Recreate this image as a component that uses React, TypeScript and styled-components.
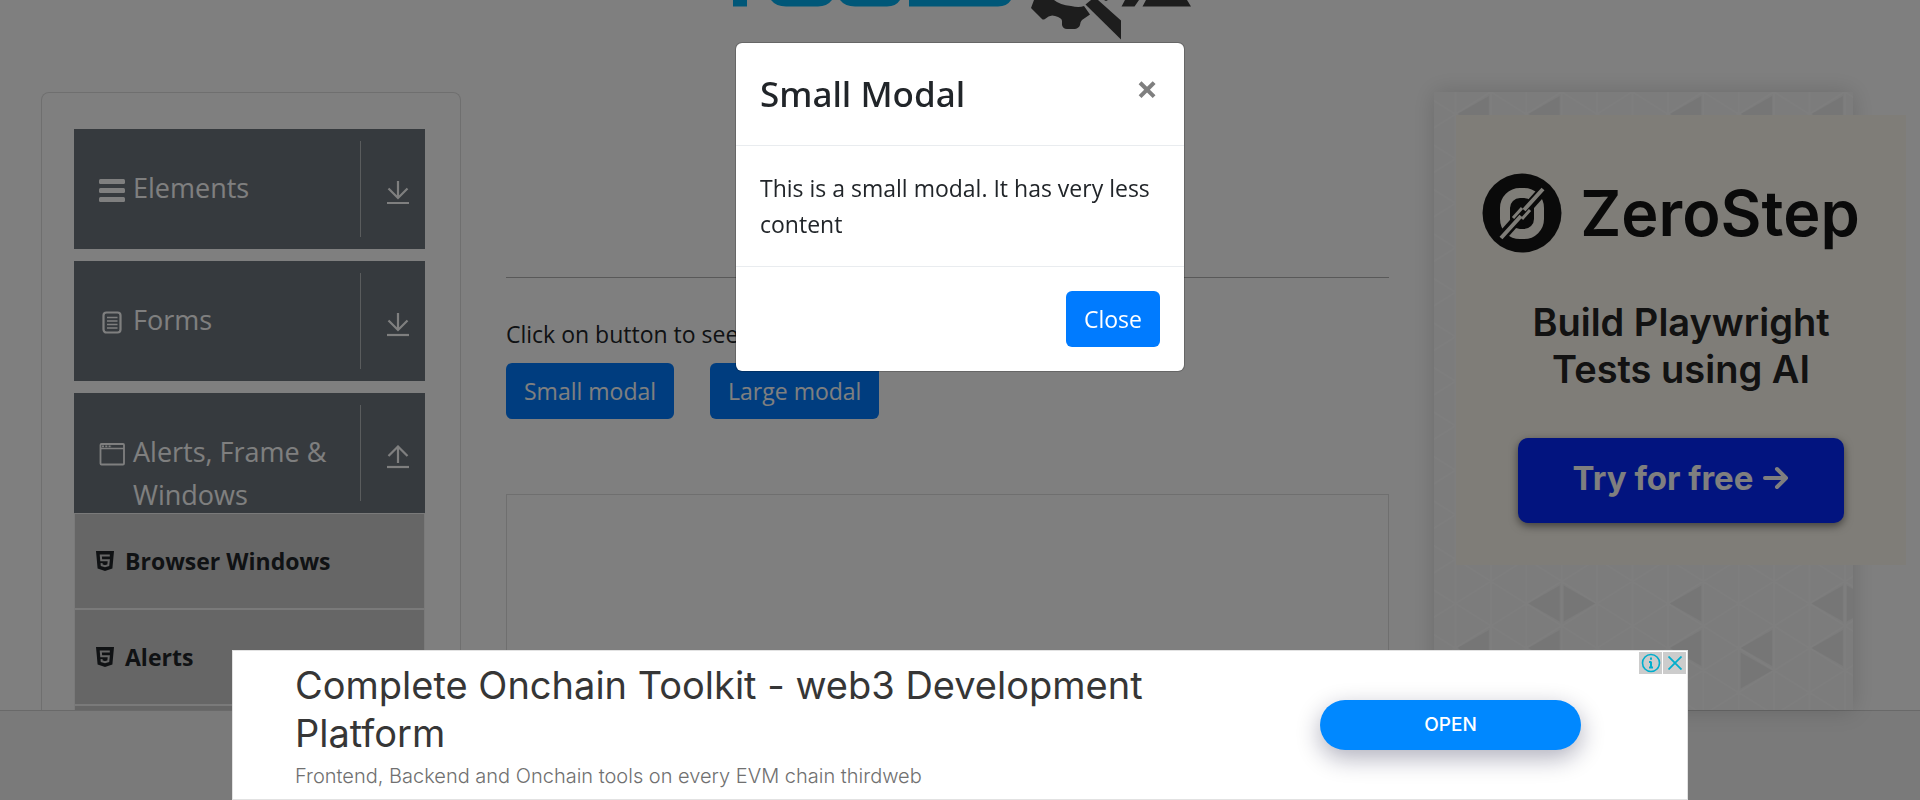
import React from 'react';
import styled, { createGlobalStyle } from 'styled-components';

const ui = '"Segoe UI", "Open Sans", "Noto Sans", sans-serif';
const adFont = 'Inter, Roboto, sans-serif';

const GlobalStyle = createGlobalStyle`
  *, *::before, *::after { box-sizing: border-box; }
  body { margin: 0; background: #fff; color: #212529; font: 400 23px/36px ${ui}; overflow: hidden; }
  h1, h2, p, ul { margin: 0; padding: 0; }
  button { font: inherit; border: 0; cursor: pointer; }
`;

const Page = styled.div`
  display: grid;
  grid-template-columns: minmax(0, 1fr);
  grid-template-rows: 92px minmax(0, 1fr) 90px;
  height: 100vh;
  overflow: hidden;
`;

const Header = styled.header`
  display: flex;
  justify-content: center;
  padding-left: 4px;
`;

const Logo = styled.svg`
  width: 460px;
  height: 40px;
`;

const Columns = styled.div`
  display: grid;
  grid-template-columns: minmax(0, 420fr) minmax(0, 883fr) minmax(0, 419fr);
  gap: 45px;
  padding: 0 67px 0 41px;
  min-height: 0;
`;

const Sidebar = styled.nav`
  display: flex;
  flex-direction: column;
  gap: 12px;
  padding: 36px 35px 0 32px;
  border: 1px solid #dfdfdf;
  border-bottom: 0;
  border-radius: 8px 8px 0 0;
  overflow: hidden;
`;

const MenuButton = styled.button`
  display: flex;
  flex: none;
  align-items: flex-start;
  width: 100%;
  height: 120px;
  padding: 0 16px 0 25px;
  background: #6c757d;
  color: #fff;
  text-align: left;
  font-size: 27px;
  line-height: 43px;
`;

const MenuIcon = styled.svg`
  flex: none;
  width: 26px;
  height: 26px;
  margin: 49px 8px 0 0;
`;

const MenuLabel = styled.span`
  flex: 1;
  padding-top: 37px;
`;

const Toggle = styled.span`
  flex: none;
  display: flex;
  align-items: center;
  align-self: center;
  height: 96px;
  padding: 8px 0 0 26px;
  border-left: 1px solid #b4b8bb;
`;

const SubMenuGroup = styled.div`
  flex: none;
`;

const SubMenu = styled.ul`
  list-style: none;
`;

const SubLink = styled.a`
  display: flex;
  align-items: center;
  gap: 11px;
  height: 96px;
  padding-left: 21px;
  border: 1px solid #f4f4f4;
  background: #ccc;
  color: #212529;
  font-weight: 700;
  text-decoration: none;
`;

const Main = styled.main`
  display: flex;
  flex-direction: column;
  padding-top: 185px;
  min-width: 0;
`;

const Rule = styled.hr`
  width: 100%;
  margin: 0 0 38px;
  border: 0;
  border-top: 1px solid #b2b2b2;
`;

const ButtonRow = styled.div`
  display: flex;
  gap: 36px;
  margin: 11px 0 75px;
`;

const PrimaryButton = styled.button`
  height: 56px;
  padding: 0 18px;
  border-radius: 6px;
  background: #007bff;
  color: #fff;
`;

const AdFrame = styled.div`
  flex: 1;
  border: 1px solid #dfdfdf;
  border-bottom: 0;
`;

const PromoPanel = styled.aside`
  position: relative;
  padding: 23px 22px 0;
  background: #f8f8f8;
  box-shadow: 0 0 22px rgba(0, 0, 0, 0.16);
`;

const Pattern = styled.svg`
  position: absolute;
  inset: 0;
  width: 100%;
  height: 100%;
`;

const Promo = styled.section`
  position: relative;
  display: flex;
  flex-direction: column;
  align-items: center;
  width: 450px;
  height: 450px;
  padding-top: 57px;
  background: #fefaf0;
  color: #151515;
  font-family: ${adFont};
`;

const Brand = styled.div`
  display: flex;
  align-items: center;
  gap: 18px;
  height: 81px;
  padding-right: 20px;
  font-size: 63px;
  font-weight: 600;
`;

const PromoText = styled.p`
  width: 340px;
  margin: 46px 0 45px;
  text-align: center;
  color: #242424;
  font-size: 38px;
  font-weight: 600;
  line-height: 47px;
`;

const PromoButton = styled.button`
  display: flex;
  align-items: center;
  justify-content: center;
  gap: 10px;
  width: 326px;
  height: 85px;
  padding-bottom: 6px;
  border-radius: 10px;
  background: #0428ff;
  box-shadow: 0 3px 8px rgba(0, 0, 0, 0.5);
  color: #fff;
  font-size: 33px;
  font-weight: 700;
`;

const Footer = styled.footer`
  border-top: 1px solid #d2d2d2;
  background: #f4f4f4;
`;

const Backdrop = styled.div`
  position: fixed;
  inset: 0;
  display: flex;
  align-items: flex-start;
  justify-content: center;
  padding-top: 42px;
  background: rgba(0, 0, 0, 0.5);
`;

const Dialog = styled.div`
  width: 450px;
  border: 1px solid rgba(0, 0, 0, 0.2);
  border-radius: 7px;
  background: #fff;
  background-clip: padding-box;
`;

const DialogHeader = styled.div`
  display: flex;
  justify-content: space-between;
  align-items: flex-start;
  padding-left: 24px;
  border-bottom: 1px solid #e9ecef;
`;

const DialogTitle = styled.h1`
  padding: 24px 0;
  font-family: "Noto Sans", sans-serif;
  font-size: 35px;
  font-weight: 500;
  line-height: 54px;
`;

const DismissButton = styled.button`
  width: 74px;
  height: 90px;
  padding: 0;
  background: none;
  color: #7f7f7f;
  font-size: 38px;
  font-weight: 700;
`;

const DialogBody = styled.p`
  padding: 24px;
`;

const DialogFooter = styled.div`
  display: flex;
  justify-content: flex-end;
  padding: 24px;
  border-top: 1px solid #e9ecef;
`;

const BannerDock = styled.div`
  position: fixed;
  left: 0;
  right: 0;
  bottom: 0;
  display: flex;
  justify-content: center;
`;

const Banner = styled.section`
  position: relative;
  display: flex;
  align-items: center;
  justify-content: space-between;
  width: 1456px;
  height: 150px;
  padding: 0 106px 0 62px;
  border: 1px solid #e2e2e2;
  background: #fff;
  font-family: ${adFont};
`;

const BannerCopy = styled.div`
  width: 920px;
`;

const BannerTitle = styled.h2`
  color: #363636;
  font-size: 38px;
  font-weight: 400;
  line-height: 48px;
`;

const BannerText = styled.p`
  margin-top: 5px;
  color: #707070;
  font-size: 20px;
  font-weight: 300;
  line-height: 28px;
`;

const OpenButton = styled.button`
  width: 261px;
  height: 50px;
  border-radius: 25px;
  background: #0088ff;
  box-shadow: 0 8px 24px rgba(10, 10, 50, 0.32);
  color: #fff;
  font-size: 19px;
  font-weight: 500;
`;

const Badges = styled.div`
  position: absolute;
  top: 1px;
  right: 1px;
  display: flex;
  gap: 1px;
`;

const Badge = styled.button`
  display: flex;
  align-items: center;
  justify-content: center;
  width: 23px;
  height: 22px;
  padding: 0;
  background: #ccc;
`;

function ToolsLogo() {
  return (
    <Logo viewBox="0 0 460 40" role="img" aria-label="Tools QA">
      <g fill="#00aef0">
        <path d="M1 0H15V6.500H1Z" />
        <path d="M39 0H100Q95 6.500 86 6.500H54Q44 6.500 39 0Z" />
        <path d="M108 0H168Q164 6.500 155 6.500H123Q113 6.500 108 0Z" />
        <path d="M177 0H279Q275 6.500 266 6.500H177Z" />
      </g>
      <g fill="#3a3a3a">
        <path d="M302 0L299 8L310 19Q311 20 313 19Q318 14 323 16Q330 18 330 21V25Q331 29 335 29H343Q347 28 348 25Q348 22 350 20L358 14.500L352 6Q347 8 339 6Q328 5 322 0Z" />
        <path d="M353.500 4.500L359 0H366L389 20.500V39.500Z" />
        <path d="M389.500 6.500L393 0H407L402.500 6.500Z" />
        <path d="M410.500 6.500L414 0H455L459 6.500Z" />
        <path d="M372 0H376L374 1Z" />
      </g>
    </Logo>
  );
}

function ElementsIcon() {
  return (
    <MenuIcon viewBox="0 0 26 26" fill="currentColor" aria-hidden="true">
      <rect x="0" y="1" width="26" height="5" rx="1.500" />
      <rect x="0" y="10" width="26" height="5" rx="1.500" />
      <rect x="0" y="19" width="26" height="5" rx="1.500" />
    </MenuIcon>
  );
}

function FormsIcon() {
  return (
    <MenuIcon viewBox="0 0 26 26" fill="none" stroke="currentColor" aria-hidden="true">
      <rect x="4.500" y="2.500" width="17" height="20" rx="3" strokeWidth="2.200" />
      <path d="M8 7.500H18.500M8 11H18.500M8 14.500H18.500M8 18H18.500" strokeWidth="1.400" />
    </MenuIcon>
  );
}

function WindowIcon() {
  return (
    <MenuIcon viewBox="0 0 26 26" fill="none" stroke="currentColor" aria-hidden="true">
      <rect x="1.500" y="2" width="23.500" height="20.500" rx="1" strokeWidth="1.800" />
      <path d="M1.500 6.500H25" strokeWidth="1.500" />
      <path d="M3 4.300H13" strokeWidth="1.800" strokeDasharray="2 1.300" />
    </MenuIcon>
  );
}

function ToggleIcon({ open }: { open?: boolean }) {
  return (
    <svg width="22" height="24" viewBox="0 0 22 24" fill="none" stroke="currentColor" strokeWidth="2.200" aria-hidden="true">
      <path d={open ? 'M11 18V1.500M1.500 11L11 1.500L20.500 11' : 'M11 0V17M1.500 7.500L11 17L20.500 7.500'} />
      <path d="M0 22H22" />
    </svg>
  );
}

function HtmlIcon() {
  return (
    <svg width="18" height="20" viewBox="0 0 18 20" aria-hidden="true">
      <path d="M0 0H18L16.400 17.600L9 20L1.600 17.600Z" fill="currentColor" />
      <path d="M13.800 4.500H4.800L5.200 9.200H12.800L12.300 14.200L9 15.200L5.700 14.200L5.500 12.200" fill="none" stroke="#ccc" strokeWidth="2" />
    </svg>
  );
}

const COL = 35.4;
const ROW = 44.5;
const vertexX = (k: number) => 21.5 + k * COL;
const vertexY = (k: number, n: number) => (k % 2 === 0 ? 22 : 0) + n * ROW;

const leftFacing = [[0, 0], [2, 0], [6, 0], [8, 0], [10, 0], [2, 11], [6, 11], [10, 11], [0, 12], [2, 12], [6, 12], [8, 12], [10, 12]];
const rightFacing = [[4, 11], [9, 13], [12, 11]];

function TrianglePattern() {
  const lines: string[] = [];
  for (let k = -1; k < 12; k++) {
    lines.push(`M${vertexX(k)} 0V700`);
    for (let n = -1; n < 16; n++) {
      const x = vertexX(k);
      const y = vertexY(k, n);
      lines.push(`M${x} ${y}L${x + COL} ${y + ROW / 2}M${x} ${y}L${x + COL} ${y - ROW / 2}`);
    }
  }
  const triangle = (k: number, n: number, dir: number) => {
    const x = vertexX(k);
    const y = vertexY(k, n);
    return `M${x + dir * 2} ${y}L${x + dir * (COL - 2)} ${y - 18}V${y + 18}Z`;
  };
  return (
    <Pattern aria-hidden="true">
      <path d={lines.join('')} stroke="#fcfcfc" strokeWidth="2" fill="none" />
      <path
        d={[...leftFacing.map(([k, n]) => triangle(k, n, 1)), ...rightFacing.map(([k, n]) => triangle(k, n, -1))].join('')}
        fill="#ededed"
      />
    </Pattern>
  );
}

function ZeroStepMark() {
  return (
    <svg width="80" height="80" viewBox="0 0 80 80" aria-hidden="true">
      <circle cx="40" cy="40" r="39.500" fill="#151515" />
      <rect x="23" y="20" width="34" height="41" rx="15" fill="none" stroke="#fefaf0" strokeWidth="10" />
      <path d="M15 69L65 13" stroke="#151515" strokeWidth="10" />
      <path d="M19 65L39 43M42 37L61 16" stroke="#fefaf0" strokeWidth="4" />
      <path d="M31 45L40 35M40 46L48 37" stroke="#fefaf0" strokeWidth="3" />
    </svg>
  );
}

function MenuItem({ icon, label, open }: { icon: React.ReactNode; label: string; open?: boolean }) {
  return (
    <MenuButton type="button" aria-expanded={!!open}>
      {icon}
      <MenuLabel>{label}</MenuLabel>
      <Toggle><ToggleIcon open={open} /></Toggle>
    </MenuButton>
  );
}

export default function App() {
  return (
    <>
      <GlobalStyle />
      <Page>
        <Header><ToolsLogo /></Header>
        <Columns>
          <Sidebar aria-label="Sections">
            <MenuItem icon={<ElementsIcon />} label="Elements" />
            <MenuItem icon={<FormsIcon />} label="Forms" />
            <SubMenuGroup>
              <MenuItem icon={<WindowIcon />} label="Alerts, Frame & Windows" open />
              <SubMenu>
                <li><SubLink href="#browser-windows"><HtmlIcon />Browser Windows</SubLink></li>
                <li><SubLink href="#alerts"><HtmlIcon />Alerts</SubLink></li>
                <li><SubLink href="#next" aria-hidden="true" tabIndex={-1} /></li>
              </SubMenu>
            </SubMenuGroup>
          </Sidebar>
          <Main>
            <Rule />
            <p>Click on button to see modal</p>
            <ButtonRow>
              <PrimaryButton type="button">Small modal</PrimaryButton>
              <PrimaryButton type="button">Large modal</PrimaryButton>
            </ButtonRow>
            <AdFrame />
          </Main>
          <PromoPanel>
            <TrianglePattern />
            <Promo>
              <Brand><ZeroStepMark />ZeroStep</Brand>
              <PromoText>Build Playwright Tests using AI</PromoText>
              <PromoButton type="button">
                Try for free
                <svg width="26" height="24" viewBox="0 0 26 24" fill="none" stroke="currentColor" strokeWidth="4" strokeLinecap="round" strokeLinejoin="round" aria-hidden="true">
                  <path d="M2 12H23M14 3L23 12L14 21" />
                </svg>
              </PromoButton>
            </Promo>
          </PromoPanel>
        </Columns>
        <Footer />
      </Page>
      <Backdrop>
        <Dialog role="dialog" aria-modal="true" aria-labelledby="dialog-title">
          <DialogHeader>
            <DialogTitle id="dialog-title">Small Modal</DialogTitle>
            <DismissButton type="button" aria-label="Dismiss">×</DismissButton>
          </DialogHeader>
          <DialogBody>This is a small modal. It has very less content</DialogBody>
          <DialogFooter>
            <PrimaryButton type="button">Close</PrimaryButton>
          </DialogFooter>
        </Dialog>
      </Backdrop>
      <BannerDock>
        <Banner>
          <BannerCopy>
            <BannerTitle>Complete Onchain Toolkit - web3 Development Platform</BannerTitle>
            <BannerText>Frontend, Backend and Onchain tools on every EVM chain thirdweb</BannerText>
          </BannerCopy>
          <OpenButton type="button">OPEN</OpenButton>
          <Badges>
            <Badge type="button" aria-label="About this ad">
              <svg width="20" height="20" viewBox="0 0 20 20" fill="none" stroke="#00aecd" strokeWidth="2" aria-hidden="true">
                <circle cx="10" cy="10" r="8.500" strokeWidth="1.600" />
                <path d="M10 4.500V6.800M10 8.500V15M8 9H10M8 14.500H12" />
              </svg>
            </Badge>
            <Badge type="button" aria-label="Close ad">
              <svg width="14" height="14" viewBox="0 0 14 14" stroke="#00aecd" strokeWidth="1.800" aria-hidden="true">
                <path d="M0.500 0.500L13.500 13.500M13.500 0.500L0.500 13.500" />
              </svg>
            </Badge>
          </Badges>
        </Banner>
      </BannerDock>
    </>
  );
}
